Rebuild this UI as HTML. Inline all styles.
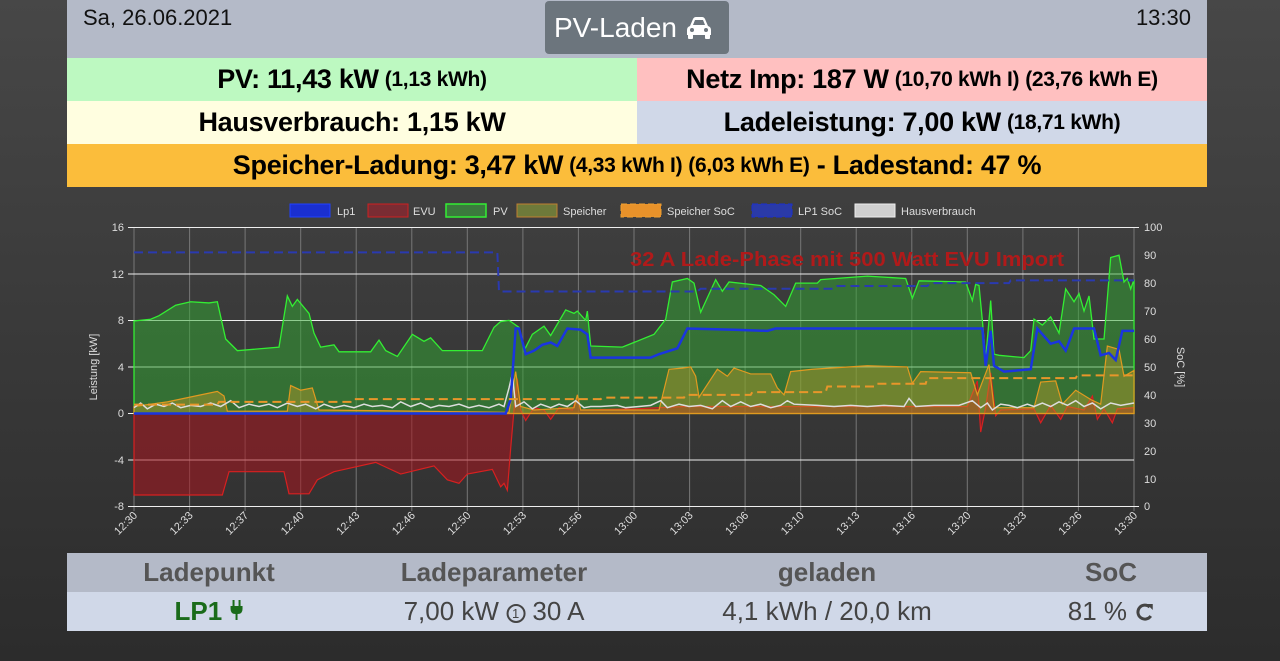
<!DOCTYPE html>
<html><head><meta charset="utf-8">
<style>
*{margin:0;padding:0;box-sizing:border-box}
body{width:1280px;height:661px;overflow:hidden;background:linear-gradient(#474747,#2c2c2c);font-family:"Liberation Sans",Arial,sans-serif;position:relative}
.abs{position:absolute}
.hdr{left:67px;top:0;width:1140px;height:58px;background:#b4bac8}
.cell{position:absolute;height:43px;display:flex;align-items:center;justify-content:center;font-weight:bold;font-size:27px;color:#000;white-space:nowrap;letter-spacing:-0.3px}
.cell small{font-size:21px;margin-left:6px}
.tb{position:absolute;left:67px;width:1140px;height:39px;display:flex;align-items:center}
.tb div{position:absolute;transform:translateX(-50%);white-space:nowrap;font-size:26px}
</style></head><body>
<div class="abs hdr"></div>
<div class="abs" style="left:83px;top:5px;font-size:22px;color:#111">Sa, 26.06.2021</div>
<div class="abs" style="right:89px;top:5px;font-size:22px;color:#111">13:30</div>
<div class="abs" style="left:545px;top:1px;width:184px;height:53px;background:#6c757d;border-radius:4px;color:#fff;font-size:28px;display:flex;align-items:center;padding-left:9px">PV-Laden
<svg width="30" height="24" viewBox="0 0 30 24" style="margin-left:7px"><path d="M6 10 L9 3 Q10 1 12 1 H18 Q20 1 21 3 L24 10 Q27 11 27 14 V19 H3 V14 Q3 11 6 10Z" fill="#fff"/><path d="M9 9 L11 4 H19 L21 9Z" fill="#6c757d"/><circle cx="8" cy="14" r="2" fill="#6c757d"/><circle cx="22" cy="14" r="2" fill="#6c757d"/><rect x="4" y="18" width="5" height="5" rx="1" fill="#fff"/><rect x="21" y="18" width="5" height="5" rx="1" fill="#fff"/></svg></div>
<div class="cell" style="left:67px;top:58px;width:570px;background:#bdf9c1">PV: 11,43 kW<small>(1,13 kWh)</small></div>
<div class="cell" style="left:637px;top:58px;width:570px;background:#ffc0c0">Netz Imp: 187 W<small>(10,70 kWh I)</small><small>(23,76 kWh E)</small></div>
<div class="cell" style="left:67px;top:101px;width:570px;background:#fffee0">Hausverbrauch: 1,15 kW</div>
<div class="cell" style="left:637px;top:101px;width:570px;background:#d0d8e8">Ladeleistung: 7,00 kW<small>(18,71 kWh)</small></div>
<div class="cell" style="left:67px;top:144px;width:1140px;background:#fbbd3b">Speicher-Ladung: 3,47 kW<small>(4,33 kWh I)</small><small>(6,03 kWh E)</small>&nbsp;- Ladestand: 47 %</div>

<svg class="abs" style="left:0;top:0" width="1280" height="661" font-family="Liberation Sans, Arial, sans-serif">
<g font-size="11" fill="#ddd">
<rect x="290" y="204" width="40" height="13" fill="#1a2fd0" stroke="#2040ff"/><text x="337" y="215">Lp1</text>
<rect x="368" y="204" width="40" height="13" fill="#7a2c33" stroke="#d02020"/><text x="413" y="215">EVU</text>
<rect x="446" y="204" width="40" height="13" fill="#3b7a3d" stroke="#33ee33" stroke-width="1.5"/><text x="493" y="215">PV</text>
<rect x="517" y="204" width="40" height="13" fill="#6e7a3a" stroke="#c08030"/><text x="563" y="215">Speicher</text>
<rect x="621" y="204" width="40" height="13" fill="#e8922a" stroke="#f0a030" stroke-dasharray="6,3"/><text x="667" y="215">Speicher SoC</text>
<rect x="752" y="204" width="40" height="13" fill="#2a3aa8" stroke="#1a2fd0" stroke-dasharray="6,3"/><text x="798" y="215">LP1 SoC</text>
<rect x="855" y="204" width="40" height="13" fill="#cfcfcf" stroke="#eee"/><text x="901" y="215">Hausverbrauch</text>
</g>
<g stroke="#777" stroke-width="1">
<line x1="134" y1="227" x2="134" y2="511"/><line x1="189.6" y1="227" x2="189.6" y2="511"/><line x1="245.1" y1="227" x2="245.1" y2="511"/><line x1="300.7" y1="227" x2="300.7" y2="511"/><line x1="356.2" y1="227" x2="356.2" y2="511"/><line x1="411.8" y1="227" x2="411.8" y2="511"/><line x1="467.3" y1="227" x2="467.3" y2="511"/><line x1="522.9" y1="227" x2="522.9" y2="511"/><line x1="578.4" y1="227" x2="578.4" y2="511"/><line x1="634" y1="227" x2="634" y2="511"/><line x1="689.6" y1="227" x2="689.6" y2="511"/><line x1="745.1" y1="227" x2="745.1" y2="511"/><line x1="800.7" y1="227" x2="800.7" y2="511"/><line x1="856.2" y1="227" x2="856.2" y2="511"/><line x1="911.8" y1="227" x2="911.8" y2="511"/><line x1="967.3" y1="227" x2="967.3" y2="511"/><line x1="1022.9" y1="227" x2="1022.9" y2="511"/><line x1="1078.4" y1="227" x2="1078.4" y2="511"/><line x1="1134" y1="227" x2="1134" y2="511"/>
</g>
<g stroke="#eee" stroke-width="1">
<line x1="128" y1="227.5" x2="1139" y2="227.5"/><line x1="128" y1="274" x2="1134" y2="274"/><line x1="128" y1="320.5" x2="1134" y2="320.5"/><line x1="128" y1="367" x2="1134" y2="367"/><line x1="128" y1="413.5" x2="1134" y2="413.5"/><line x1="128" y1="460" x2="1134" y2="460"/><line x1="128" y1="506.5" x2="1139" y2="506.5"/>
</g>
<g font-size="11" fill="#ddd" text-anchor="end">
<text x="124" y="231">16</text><text x="124" y="278">12</text><text x="124" y="324">8</text><text x="124" y="371">4</text><text x="124" y="417">0</text><text x="124" y="464">-4</text><text x="124" y="510">-8</text>
</g>
<g font-size="11" fill="#ddd">
<text x="1144" y="231">100</text><text x="1144" y="259">90</text><text x="1144" y="287">80</text><text x="1144" y="315">70</text><text x="1144" y="343">60</text><text x="1144" y="371">50</text><text x="1144" y="399">40</text><text x="1144" y="427">30</text><text x="1144" y="455">20</text><text x="1144" y="483">10</text><text x="1144" y="510">0</text>
</g>
<text font-size="11" fill="#ddd" text-anchor="middle" transform="translate(97,367) rotate(-90)">Leistung [kW]</text>
<text font-size="11" fill="#ddd" text-anchor="middle" transform="translate(1177,367) rotate(90)">SoC [%]</text>
<g font-size="11" fill="#ddd" text-anchor="end">
<text transform="translate(138,516) rotate(-45)">12:30</text><text transform="translate(193.6,516) rotate(-45)">12:33</text><text transform="translate(249.1,516) rotate(-45)">12:37</text><text transform="translate(304.7,516) rotate(-45)">12:40</text><text transform="translate(360.2,516) rotate(-45)">12:43</text><text transform="translate(415.8,516) rotate(-45)">12:46</text><text transform="translate(471.3,516) rotate(-45)">12:50</text><text transform="translate(526.9,516) rotate(-45)">12:53</text><text transform="translate(582.4,516) rotate(-45)">12:56</text><text transform="translate(638,516) rotate(-45)">13:00</text><text transform="translate(693.6,516) rotate(-45)">13:03</text><text transform="translate(749.1,516) rotate(-45)">13:06</text><text transform="translate(804.7,516) rotate(-45)">13:10</text><text transform="translate(860.2,516) rotate(-45)">13:13</text><text transform="translate(915.8,516) rotate(-45)">13:16</text><text transform="translate(971.3,516) rotate(-45)">13:20</text><text transform="translate(1026.9,516) rotate(-45)">13:23</text><text transform="translate(1082.4,516) rotate(-45)">13:26</text><text transform="translate(1138,516) rotate(-45)">13:30</text>
</g>
<g transform="translate(134,413.5) scale(16.667,-11.64)">
<path vector-effect="non-scaling-stroke" fill="rgba(50,170,50,0.5)" stroke="#33ee33" stroke-width="1.3" d="M0,0 L0,7.95 1,8.1 1.5,8.4 2.5,9.3 3.4,9.6 4.5,9.5 5,9.6 5.5,6.4 6.2,5.4 8.7,5.7 9.2,10.1 9.5,9.2 9.8,9.8 10.5,8.6 10.8,6.9 11.2,5.7 12,5.9 12.3,5.3 14.2,5.3 14.7,6.3 15.1,5.4 15.8,4.9 16.7,6.8 17.4,6.2 17.8,6.5 18.5,5.4 20.9,5.4 21.6,7.4 22,7.9 22.5,8 23.1,7.4 23.4,5.4 23.9,6.8 24.6,7.5 25,6.7 25.9,8.9 26.4,8.6 26.6,8.8 27.1,8 27.2,8.8 27.4,5.8 29.3,5.7 31.2,6.8 31.9,8.1 32.3,11.3 33.2,11.6 33.6,11.2 34,8.7 34.9,11.5 35.3,10.5 35.7,11.3 37.6,11 38.4,10.2 39.1,9.2 39.7,11.2 41,11.2 41.2,11.5 44,11.8 46.3,11.6 46.7,9.9 47.1,11.4 49.9,11.3 50.3,9.7 50.5,11.1 50.7,11 50.9,8 51.1,4.7 51.4,9.7 51.6,5.1 51.9,5 53.4,4.8 53.8,5.4 54,8.1 54.5,7.6 55,8.3 55.5,6.9 55.9,10.7 56.4,9.6 56.7,10.3 57,8.8 57.3,10.1 57.6,6.4 58.2,6.4 58.6,13.4 59.1,13.6 59.4,11.3 59.6,11.6 59.8,10.7 60,11.5 L60,0Z"/>
<path vector-effect="non-scaling-stroke" fill="rgba(170,20,30,0.55)" stroke="#d82020" stroke-width="1.2" d="M0,0 L0,-7 5.3,-7 5.7,-5 9,-5 9.3,-6.9 10.5,-6.9 11,-5.7 12,-5 14.5,-4.2 16,-5.2 18,-4.5 18.8,-5.7 19.5,-6 20,-5.2 21.5,-4.8 22,-6.3 22.2,-6 22.4,-6.6 22.6,-3 22.8,0.3 23,3 23.2,0.3 23.5,-0.6 24,0.5 24.6,0.3 25,-0.5 25.5,0.5 26.3,0.3 26.6,1.5 26.8,0.3 30,0.4 33,0.6 40,0.6 50,0.6 50.6,2.8 50.8,-1.6 51.1,0.5 51.4,3.5 51.7,-0.2 52,0.3 54,0.4 54.4,-0.8 55,0.7 55.6,-0.5 56,0.6 57,0.3 57.5,1.5 57.8,-0.5 58.2,0.4 58.7,-0.8 59,0.4 60,0.5 L60,0Z"/>
<path vector-effect="non-scaling-stroke" fill="rgba(200,160,40,0.4)" stroke="#e09a20" stroke-width="1.2" d="M0,0 L0,0.6 2,1 4,1.6 5,1.9 5.4,1.5 5.6,0.2 9.2,0.2 9.4,2.4 10,2 10.7,2.2 11.1,0.3 22.5,0.1 22.9,3.6 23.2,0.6 24,0.3 26.4,0.5 26.6,1.6 26.8,0.3 31.5,0.3 32.1,3.8 32.9,3.9 33.4,4 33.7,3.2 33.9,1.4 35,3.8 35.6,3.2 36,3.9 37,3.4 38.2,3.4 38.6,2.2 39,1.6 39.4,3.6 40.7,3.8 44,4.1 46.4,4 46.7,2.6 47.2,3.6 50.2,3.5 50.6,1.6 51.3,4.2 51.6,0.5 54,0.5 54.4,2.7 55.3,2.8 55.7,0.8 56.5,2 57.4,1.2 58,0.8 58.4,5.8 59.1,5.5 59.4,3.2 60,3.7 L60,0Z"/>
<polyline vector-effect="non-scaling-stroke" fill="none" stroke="#dddddd" stroke-width="1.5" points="0,0.5 0.4,0.9 0.8,0.4 1.3,0.8 1.8,0.6 2.3,0.9 2.8,0.5 3.4,0.7 4,0.6 4.6,0.9 5.2,0.6 5.8,1.1 6.3,0.5 6.9,0.8 7.5,0.6 8.1,0.8 8.6,0.5 9.2,0.9 9.8,0.6 10.3,0.8 10.9,0.4 11.4,0.8 12,0.5 12.6,0.7 13.2,0.5 13.8,0.8 14.3,0.6 14.9,0.7 15.5,0.5 16,1.0 16.6,0.6 17.2,0.9 17.8,0.5 18.3,0.7 18.9,0.6 19.5,0.8 20.1,0.5 20.7,0.7 21.3,0.5 21.9,0.8 22.2,0.6 22.5,2.2 22.7,3.4 22.9,0.6 23.4,1.0 23.9,0.4 24.4,0.8 25,0.5 25.5,0.8 26,0.6 26.5,1.1 27,0.5 27.4,0.6 28,0.6 29,0.7 29.5,0.5 30.3,0.6 31,0.7 31.6,1.1 32,0.5 32.7,0.8 33.3,0.6 34,0.7 34.7,0.4 35.3,1.1 35.8,0.6 36.4,1.0 37,0.6 37.6,0.8 38.2,0.5 38.8,0.7 39.2,1.1 39.6,0.8 41,0.7 42,0.6 43,0.7 44,0.6 45,0.7 46.2,0.6 46.5,1.3 46.9,0.6 48,0.7 49.5,0.7 50.3,1.1 50.8,0.5 51.2,0.9 51.5,0.3 52,0.8 52.5,0.7 53,0.5 53.6,0.8 54,0.6 54.5,0.9 55,0.6 55.5,1.0 56,0.7 56.5,1.1 57,0.6 57.5,0.9 58,0.4 58.6,0.9 59.2,0.7 60,0.9"/>
<polyline vector-effect="non-scaling-stroke" fill="none" stroke="#1a35e0" stroke-width="2.5" points="0,0 22.3,0 22.6,1.2 22.9,7.3 23.1,7.3 23.5,5.1 24,5.4 24.5,5.9 25,6.1 25.4,5.8 26,7.3 26.8,7.2 27.2,6.8 27.4,4.8 31,4.8 31.5,5.1 32.6,5.6 33.2,7.3 36,7.2 38,7.1 38.5,7.3 40,7.3 50.9,7.3 51.1,4.1 51.4,7.1 51.6,4.1 52.2,3.6 53.8,3.8 54.2,7.3 55,6 55.5,6.2 55.9,5.4 56.4,7.3 57.6,7.3 58,5 58.5,5.2 58.9,4.6 59.3,7.1 60,7.1"/>
</g>
<g transform="translate(134,506.6) scale(16.667,-2.793)">
<polyline vector-effect="non-scaling-stroke" fill="none" stroke="#e8962a" stroke-width="2" stroke-dasharray="9,5" points="0,36.5 5,36.5 5.1,37.5 13,37.5 13.1,38.5 28,38.5 28.1,39 33,39 33.1,40 37,40 37.1,41 41.5,41 41.6,43 44.5,43 44.6,44 47.5,44 47.6,46 56.5,46 56.6,47 60,47"/>
<polyline vector-effect="non-scaling-stroke" fill="none" stroke="#2a3ab0" stroke-width="2" stroke-dasharray="9,5" points="0,91 21.8,91 21.9,77 33.8,77 34,78 42,78 42.2,79 47.6,79 47.8,80 52.5,80 52.6,81 60,81"/>
</g>
<text x="630" y="266" font-size="20" font-weight="bold" fill="#b01a1a" textLength="434" lengthAdjust="spacingAndGlyphs">32 A Lade-Phase mit 500 Watt EVU Import</text>
</svg>

<div class="tb" style="top:553px;background:#b4bac8;font-weight:bold;color:#555">
<div style="left:142px">Ladepunkt</div><div style="left:427px">Ladeparameter</div><div style="left:760px">geladen</div><div style="left:1044px">SoC</div>
</div>
<div class="tb" style="top:592px;background:#d0d8e8;color:#444">
<div style="left:142px;color:#1a6b1a;font-weight:bold">LP1 <svg width="14" height="20" viewBox="0 0 14 20"><rect x="3" y="0" width="2" height="6" fill="#1a6b1a"/><rect x="9" y="0" width="2" height="6" fill="#1a6b1a"/><path d="M1 6 H13 V9 Q13 14 8 14 V20 H6 V14 Q1 14 1 9Z" fill="#1a6b1a"/></svg></div>
<div style="left:427px">7,00 kW <span style="display:inline-block;width:19px;height:19px;border:2px solid #444;border-radius:50%;font-size:13px;text-align:center;line-height:15px;vertical-align:2px">1</span> 30 A</div>
<div style="left:760px">4,1 kWh / 20,0 km</div>
<div style="left:1044px">81 % <svg width="20" height="20" viewBox="0 0 20 20" style="vertical-align:-2px"><path d="M15 5 A7 7 0 1 0 16 14" fill="none" stroke="#444" stroke-width="3"/><path d="M12 2 L18 2 L18 8Z" fill="#444"/></svg></div>
</div>
</body></html>
